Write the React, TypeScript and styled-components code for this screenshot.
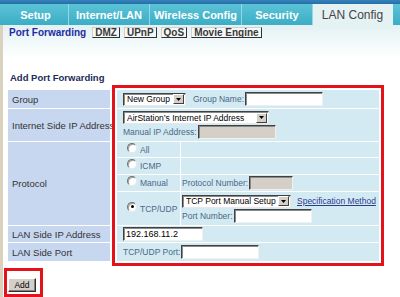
import styled, { createGlobalStyle } from "styled-components";

const GlobalStyle = createGlobalStyle`
  html, body {
    margin: 0;
    padding: 0;
    background: #ffffff;
  }
  body {
    font-family: "Liberation Sans", Arial, sans-serif;
  }
`;

const Page = styled.div`
  width: 400px;
  height: 297px;
  overflow: hidden;
  display: flex;
  flex-direction: column;
`;

const TopBand = styled.div`
  height: 4px;
  background: linear-gradient(#3682bb, #2670a8);
`;

const TabBar = styled.div`
  height: 22px;
  display: flex;
  padding-left: 3px;
  background: linear-gradient(#5bc3d7, #3badc5);
`;

const Tab = styled.div<{ $w: number; $active?: boolean }>`
  width: ${(p) => p.$w}px;
  flex: none;
  display: flex;
  align-items: center;
  justify-content: center;
  box-sizing: border-box;
  border-right: 1px solid ${(p) => (p.$active ? "#e4f2f4" : "#92d8e5")};
  font-size: ${(p) => (p.$active ? 12 : 11)}px;
  font-weight: ${(p) => (p.$active ? "normal" : "bold")};
  color: ${(p) => (p.$active ? "#444444" : "#ffffff")};
  background: ${(p) => (p.$active ? "#e4f2f4" : "transparent")};
  padding-top: 1px;
`;

const Content = styled.div`
  flex: 1;
  border-left: 3px solid #dad2bd;
  background: linear-gradient(#e2f1f3 0px, #f4fafb 20px, #ffffff 34px);
  display: flex;
  flex-direction: column;
  align-items: flex-start;
`;

const SubNav = styled.div`
  display: flex;
  align-items: center;
  gap: 4px;
  margin: 2px 0 0 6px;
  height: 10px;
`;

const SubCurrent = styled.span`
  font-size: 10px;
  font-weight: bold;
  color: #1f2aa2;
  margin-right: 2px;
`;

const SubBtn = styled.span`
  font-size: 10px;
  font-weight: bold;
  color: #383838;
  line-height: 9px;
  padding: 0 2px;
  background: #f6f8f8;
  border: 1px solid;
  border-color: #d0d0d0 #303030 #303030 #d0d0d0;
`;

const Title = styled.div`
  margin: 35px 0 0 7px;
  font-size: 9.5px;
  font-weight: bold;
  color: #1c2b56;
  line-height: 11px;
`;

const FormArea = styled.div`
  display: flex;
  align-items: flex-start;
  margin: 2px 0 0 5px;
  gap: 2px;
`;

const LabelCol = styled.div`
  width: 102px;
  margin-top: 5px;
  display: flex;
  flex-direction: column;
  gap: 1px;
`;

const LabelCell = styled.div<{ $h: number }>`
  height: ${(p) => p.$h}px;
  background: #c7d7ef;
  display: flex;
  align-items: center;
  padding-left: 4px;
  font-size: 9.5px;
  color: #333333;
  white-space: nowrap;
`;

const RedFrame = styled.div`
  position: relative;
  width: 272px;
  box-sizing: border-box;
  border: 3px solid #e4131b;
  padding: 2px;
  background: #ffffff;
`;

const ValueCol = styled.div`
  display: flex;
  flex-direction: column;
  gap: 1px;
`;

const ValueCell = styled.div<{ $h: number; $stack?: boolean }>`
  height: ${(p) => p.$h}px;
  background: #d3eaf3;
  display: flex;
  flex-direction: ${(p) => (p.$stack ? "column" : "row")};
  align-items: ${(p) => (p.$stack ? "flex-start" : "center")};
  justify-content: ${(p) => (p.$stack ? "center" : "flex-start")};
  gap: ${(p) => (p.$stack ? 1 : 7)}px;
  padding-left: 6px;
`;

const Line = styled.div`
  display: flex;
  align-items: center;
  gap: 1px;
`;

const ProtoRow = styled.div<{ $h: number }>`
  height: ${(p) => p.$h}px;
  display: grid;
  grid-template-columns: 63px 1fr;
  gap: 1px;
`;

const RadioCell = styled.div`
  background: #d3eaf3;
  display: flex;
  align-items: center;
  padding-left: 10px;
  gap: 3px;
`;

const ExtraCell = styled.div<{ $stack?: boolean }>`
  background: #d3eaf3;
  display: flex;
  flex-direction: ${(p) => (p.$stack ? "column" : "row")};
  justify-content: ${(p) => (p.$stack ? "center" : "flex-start")};
  align-items: ${(p) => (p.$stack ? "flex-start" : "center")};
  gap: 1px;
  padding-left: 1px;
`;

const FieldLabel = styled.span`
  font-size: 8.5px;
  color: #4b6884;
  white-space: nowrap;
`;

const Radio = styled.span<{ $checked?: boolean }>`
  width: 8px;
  height: 8px;
  border-radius: 50%;
  border: 1px solid;
  border-color: #707070 #e8e8e8 #e8e8e8 #707070;
  background: #ffffff;
  box-shadow: inset 1px 1px 0 #a0a0a0;
  margin-top: -4px;
  display: flex;
  align-items: center;
  justify-content: center;
  flex: none;

  &::after {
    content: "";
    width: 3px;
    height: 3px;
    border-radius: 50%;
    background: ${(p) => (p.$checked ? "#000000" : "transparent")};
  }
`;

const Input = styled.input<{ $w: number; $disabled?: boolean }>`
  width: ${(p) => p.$w}px;
  height: 14px;
  box-sizing: border-box;
  margin: 0;
  padding: 0 2px;
  font-family: "Liberation Sans", Arial, sans-serif;
  font-size: 9px;
  color: #000000;
  background: ${(p) => (p.$disabled ? "#d4d0c8" : "#ffffff")};
  border: 1px solid;
  border-color: #404040 #f0f0f0 #f0f0f0 #404040;
  box-shadow: inset 1px 1px 0 #8a8a8a;
  outline: none;
`;

const Select = styled.div<{ $w: number }>`
  width: ${(p) => p.$w}px;
  height: 13px;
  box-sizing: border-box;
  display: flex;
  align-items: center;
  background: #ffffff;
  border: 1px solid;
  border-color: #404040 #e8e8e8 #e8e8e8 #404040;
  box-shadow: inset 1px 1px 0 #8a8a8a;
  padding: 1px;
`;

const SelectText = styled.span`
  flex: 1;
  font-size: 8.5px;
  color: #000000;
  padding-left: 2px;
  white-space: nowrap;
  overflow: hidden;
`;

const SelectArrow = styled.span`
  width: 11px;
  height: 10px;
  box-sizing: border-box;
  flex: none;
  background: #d4d0c8;
  border: 1px solid;
  border-color: #ffffff #404040 #404040 #ffffff;
  display: flex;
  align-items: center;
  justify-content: center;
`;

const Link = styled.a`
  font-size: 8.5px;
  color: #2b3c8c;
  text-decoration: underline;
  margin-left: 5px;
  white-space: nowrap;
`;

const AddFrame = styled.div`
  margin: 2px 0 0 1px;
  border: 3px solid #e4131b;
  padding: 3px 4px 2px 1px;
`;

const Button = styled.button`
  width: 28px;
  height: 14px;
  box-sizing: border-box;
  margin: 0;
  padding: 0;
  font-family: "Liberation Sans", Arial, sans-serif;
  font-size: 8.5px;
  color: #000000;
  background: #d4d0c8;
  border: 1px solid;
  border-color: #ffffff #303030 #303030 #ffffff;
  box-shadow: inset -1px -1px 0 #808080;
`;

function FakeSelect({ w, text }: { w: number; text: string }) {
  return (
    <Select $w={w}>
      <SelectText>{text}</SelectText>
      <SelectArrow>
        <svg width="5" height="3" viewBox="0 0 5 3">
          <path d="M0 0h5L2.5 3z" fill="#000" />
        </svg>
      </SelectArrow>
    </Select>
  );
}

const tabs = [
  { label: "Setup", w: 66 },
  { label: "Internet/LAN", w: 81 },
  { label: "Wireless Config", w: 92 },
  { label: "Security", w: 71 },
];

export default function App() {
  return (
    <Page>
      <GlobalStyle />
      <TopBand />
      <TabBar>
        {tabs.map((t) => (
          <Tab key={t.label} $w={t.w}>
            {t.label}
          </Tab>
        ))}
        <Tab $w={80} $active>
          LAN Config
        </Tab>
      </TabBar>
      <Content>
        <SubNav>
          <SubCurrent>Port Forwarding</SubCurrent>
          <SubBtn>DMZ</SubBtn>
          <SubBtn>UPnP</SubBtn>
          <SubBtn>QoS</SubBtn>
          <SubBtn>Movie Engine</SubBtn>
        </SubNav>
        <Title>Add Port Forwarding</Title>
        <FormArea>
          <LabelCol>
            <LabelCell $h={18}>Group</LabelCell>
            <LabelCell $h={32}>Internet Side IP Address</LabelCell>
            <LabelCell $h={83}>Protocol</LabelCell>
            <LabelCell $h={16}>LAN Side IP Address</LabelCell>
            <LabelCell $h={18}>LAN Side Port</LabelCell>
          </LabelCol>
          <RedFrame>
            <ValueCol>
              <ValueCell $h={18}>
                <FakeSelect w={63} text="New Group" />
                <Line>
                  <FieldLabel>Group Name:</FieldLabel>
                  <Input $w={78} />
                </Line>
              </ValueCell>
              <ValueCell $h={32} $stack>
                <FakeSelect w={146} text="AirStation’s Internet IP Address" />
                <Line>
                  <FieldLabel>Manual IP Address:</FieldLabel>
                  <Input $w={78} $disabled disabled />
                </Line>
              </ValueCell>
              <ProtoRow $h={15}>
                <RadioCell>
                  <Radio />
                  <FieldLabel>All</FieldLabel>
                </RadioCell>
                <ExtraCell />
              </ProtoRow>
              <ProtoRow $h={16}>
                <RadioCell>
                  <Radio />
                  <FieldLabel>ICMP</FieldLabel>
                </RadioCell>
                <ExtraCell />
              </ProtoRow>
              <ProtoRow $h={16}>
                <RadioCell>
                  <Radio />
                  <FieldLabel>Manual</FieldLabel>
                </RadioCell>
                <ExtraCell>
                  <FieldLabel>Protocol Number:</FieldLabel>
                  <Input $w={44} $disabled disabled />
                </ExtraCell>
              </ProtoRow>
              <ProtoRow $h={33}>
                <RadioCell>
                  <Radio $checked />
                  <FieldLabel>TCP/UDP</FieldLabel>
                </RadioCell>
                <ExtraCell $stack>
                  <Line>
                    <FakeSelect w={109} text="TCP Port Manual Setup" />
                    <Link>Specification Method</Link>
                  </Line>
                  <Line>
                    <FieldLabel>Port Number:</FieldLabel>
                    <Input $w={78} />
                  </Line>
                </ExtraCell>
              </ProtoRow>
              <ValueCell $h={16}>
                <Input $w={80} defaultValue="192.168.11.2" />
              </ValueCell>
              <ValueCell $h={18}>
                <Line>
                  <FieldLabel>TCP/UDP Port:</FieldLabel>
                  <Input $w={78} />
                </Line>
              </ValueCell>
            </ValueCol>
          </RedFrame>
        </FormArea>
        <AddFrame>
          <Button>Add</Button>
        </AddFrame>
      </Content>
    </Page>
  );
}
